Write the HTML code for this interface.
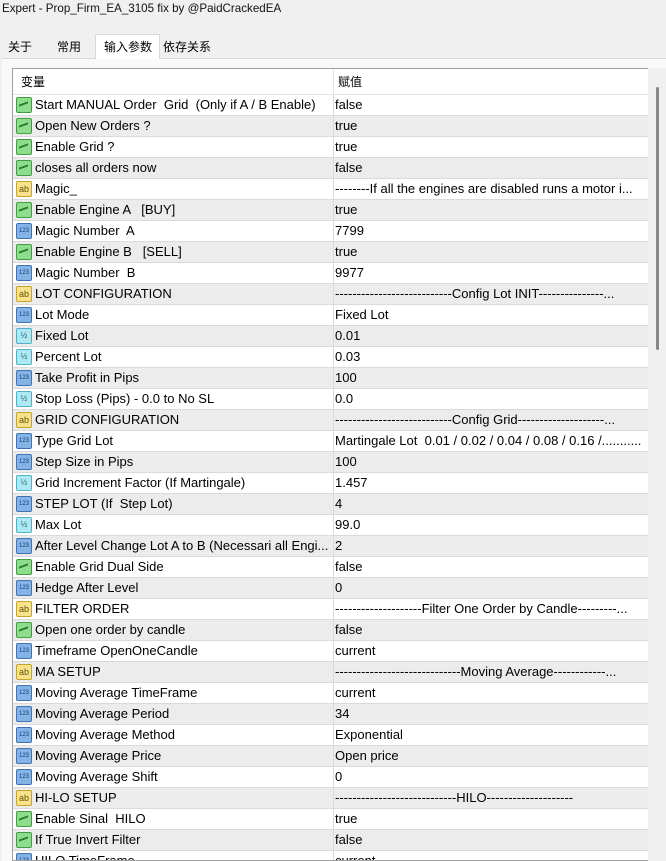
<!DOCTYPE html>
<html><head><meta charset="utf-8"><style>
*{margin:0;padding:0;box-sizing:border-box}
body{width:666px;height:861px;overflow:hidden;background:#f0f0f0;font-family:"Liberation Sans","Noto Sans CJK SC",sans-serif;font-size:13px;color:#000;position:relative}
.title{position:absolute;left:2px;top:2px;font-size:11.6px;color:#111}
.tab{position:absolute;top:37px;height:21px;font-size:12px;line-height:20px}
.sel{background:#fff;border:1px solid #d9d9d9;border-bottom:none;top:34px;height:25px;padding-top:2px}
.panel{position:absolute;left:2px;top:58px;width:664px;height:803px;background:#f9f9f9;border-top:1px solid #d9d9d9}
.tbl{position:absolute;left:12px;top:68px;width:654px;height:793px;background:#fff;border:1px solid #a0a0a0;border-right:none;overflow:hidden}
.hdr{height:26px;line-height:26px;position:relative;font-size:12px;border-bottom:1px solid #e5e5e5}
.hdr span{position:absolute}
.row{height:21px;position:relative;border-bottom:1px solid #dadada;white-space:pre;line-height:20px}
.row:nth-child(even){background:#ececec}
.n{position:absolute;left:22px;width:296px;overflow:hidden}
.v{position:absolute;left:320px;width:316px;overflow:hidden;border-left:1px solid #dadada;padding-left:1px}
.ic{position:absolute;left:3px;top:2px;width:16px;height:16px;border-radius:2px;font-style:normal;font-size:9px;line-height:14px;text-align:center;font-family:"Liberation Sans",sans-serif}
.b{background:#8fdc8f;border:1px solid #3f9f3f}
.b:after{content:"";position:absolute;left:2px;top:5px;width:9px;height:4px;border-top:2px solid #2c7a2c;transform:skewY(-20deg)}
.a{background:#f7e38c;border:1px solid #c9a42a;color:#6a5200}
.i{background:#86b3e6;border:1px solid #3f73b8;color:#123e7a;font-size:6px}
.h{background:#aee8f2;border:1px solid #4fb0c6;color:#1b6678;font-size:8px}
.sb{position:absolute;left:648px;top:68px;width:18px;height:793px;background:#f0f0f0}
.th{position:absolute;left:656px;top:87px;width:3px;height:263px;background:#888;border-radius:2px}
</style></head><body>
<div class="title">Expert - Prop_Firm_EA_3105 fix by @PaidCrackedEA</div>
<div class="tab" style="left:8px">关于</div>
<div class="tab" style="left:57px">常用</div>
<div class="panel"></div>
<div class="tab sel" style="left:95px;width:65px;padding-left:8px">输入参数</div>
<div class="tab" style="left:163px">依存关系</div>
<div class="tbl">
<div class="hdr"><span style="left:8px">变量</span><span style="left:320px;border-left:1px solid #e5e5e5;padding-left:4px">赋值</span></div>
<div>
<div class="row"><i class="ic b"></i><span class="n">Start MANUAL Order  Grid  (Only if A / B Enable)</span><span class="v">false</span></div>
<div class="row"><i class="ic b"></i><span class="n">Open New Orders ?</span><span class="v">true</span></div>
<div class="row"><i class="ic b"></i><span class="n">Enable Grid ?</span><span class="v">true</span></div>
<div class="row"><i class="ic b"></i><span class="n">closes all orders now</span><span class="v">false</span></div>
<div class="row"><i class="ic a">ab</i><span class="n">Magic_</span><span class="v">--------If all the engines are disabled runs a motor i...</span></div>
<div class="row"><i class="ic b"></i><span class="n">Enable Engine A   [BUY]</span><span class="v">true</span></div>
<div class="row"><i class="ic i">123</i><span class="n">Magic Number  A</span><span class="v">7799</span></div>
<div class="row"><i class="ic b"></i><span class="n">Enable Engine B   [SELL]</span><span class="v">true</span></div>
<div class="row"><i class="ic i">123</i><span class="n">Magic Number  B</span><span class="v">9977</span></div>
<div class="row"><i class="ic a">ab</i><span class="n">LOT CONFIGURATION</span><span class="v">---------------------------Config Lot INIT---------------...</span></div>
<div class="row"><i class="ic i">123</i><span class="n">Lot Mode</span><span class="v">Fixed Lot</span></div>
<div class="row"><i class="ic h">½</i><span class="n">Fixed Lot</span><span class="v">0.01</span></div>
<div class="row"><i class="ic h">½</i><span class="n">Percent Lot</span><span class="v">0.03</span></div>
<div class="row"><i class="ic i">123</i><span class="n">Take Profit in Pips</span><span class="v">100</span></div>
<div class="row"><i class="ic h">½</i><span class="n">Stop Loss (Pips) - 0.0 to No SL</span><span class="v">0.0</span></div>
<div class="row"><i class="ic a">ab</i><span class="n">GRID CONFIGURATION</span><span class="v">---------------------------Config Grid--------------------...</span></div>
<div class="row"><i class="ic i">123</i><span class="n">Type Grid Lot</span><span class="v">Martingale Lot  0.01 / 0.02 / 0.04 / 0.08 / 0.16 /...........</span></div>
<div class="row"><i class="ic i">123</i><span class="n">Step Size in Pips</span><span class="v">100</span></div>
<div class="row"><i class="ic h">½</i><span class="n">Grid Increment Factor (If Martingale)</span><span class="v">1.457</span></div>
<div class="row"><i class="ic i">123</i><span class="n">STEP LOT (If  Step Lot)</span><span class="v">4</span></div>
<div class="row"><i class="ic h">½</i><span class="n">Max Lot</span><span class="v">99.0</span></div>
<div class="row"><i class="ic i">123</i><span class="n">After Level Change Lot A to B (Necessari all Engi...</span><span class="v">2</span></div>
<div class="row"><i class="ic b"></i><span class="n">Enable Grid Dual Side</span><span class="v">false</span></div>
<div class="row"><i class="ic i">123</i><span class="n">Hedge After Level</span><span class="v">0</span></div>
<div class="row"><i class="ic a">ab</i><span class="n">FILTER ORDER</span><span class="v">--------------------Filter One Order by Candle---------...</span></div>
<div class="row"><i class="ic b"></i><span class="n">Open one order by candle</span><span class="v">false</span></div>
<div class="row"><i class="ic i">123</i><span class="n">Timeframe OpenOneCandle</span><span class="v">current</span></div>
<div class="row"><i class="ic a">ab</i><span class="n">MA SETUP</span><span class="v">-----------------------------Moving Average------------...</span></div>
<div class="row"><i class="ic i">123</i><span class="n">Moving Average TimeFrame</span><span class="v">current</span></div>
<div class="row"><i class="ic i">123</i><span class="n">Moving Average Period</span><span class="v">34</span></div>
<div class="row"><i class="ic i">123</i><span class="n">Moving Average Method</span><span class="v">Exponential</span></div>
<div class="row"><i class="ic i">123</i><span class="n">Moving Average Price</span><span class="v">Open price</span></div>
<div class="row"><i class="ic i">123</i><span class="n">Moving Average Shift</span><span class="v">0</span></div>
<div class="row"><i class="ic a">ab</i><span class="n">HI-LO SETUP</span><span class="v">----------------------------HILO--------------------</span></div>
<div class="row"><i class="ic b"></i><span class="n">Enable Sinal  HILO</span><span class="v">true</span></div>
<div class="row"><i class="ic b"></i><span class="n">If True Invert Filter</span><span class="v">false</span></div>
<div class="row"><i class="ic i">123</i><span class="n">HILO TimeFrame</span><span class="v">current</span></div>
</div></div>
<div class="sb"></div><div class="th"></div>
</body></html>
